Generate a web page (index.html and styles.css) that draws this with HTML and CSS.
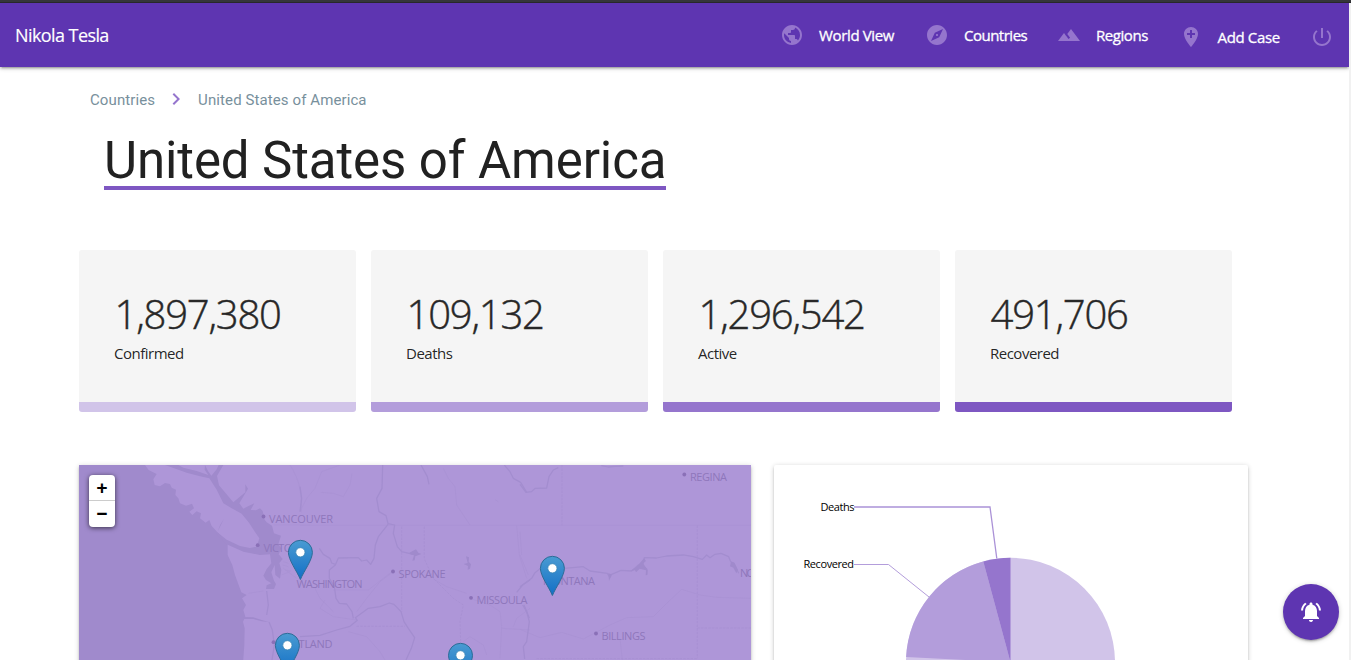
FILE: index.html
```html
<!DOCTYPE html>
<html lang="en">
<head>
<meta charset="utf-8">
<title>United States of America</title>
<link rel="stylesheet" href="styles.css">
</head>
<body>
<div class="topline"></div>
<div class="view">
<div class="page">
  <nav class="navbar">
    <span class="brand"><span class="fit">Nikola Tesla</span></span>
    <ul class="menu">
      <li class="item item-world"><svg class="icon" viewBox="0 0 24 24"><path d="M12 2C6.48 2 2 6.48 2 12s4.480 10 10 10 10-4.480 10-10S17.520 2 12 2zm-1 17.930c-3.950-.49-7-3.850-7-7.930 0-.62.08-1.210.21-1.790L9 15v1c0 1.100.9 2 2 2v1.930zm6.900-2.540c-.26-.81-1-1.390-1.900-1.390h-1v-3c0-.55-.45-1-1-1H8v-2h2c.55 0 1-.45 1-1V7h2c1.100 0 2-.9 2-2v-.41c2.930 1.190 5 4.060 5 7.410 0 2.080-.8 3.970-2.100 5.390z"/></svg><span class="fit">World View</span></li>
      <li class="item item-countries"><svg class="icon" viewBox="0 0 24 24"><path d="M12 10.900c-.61 0-1.100.49-1.100 1.100s.49 1.100 1.100 1.100 1.100-.49 1.100-1.100-.49-1.100-1.100-1.100zM12 2C6.480 2 2 6.480 2 12s4.480 10 10 10 10-4.480 10-10S17.520 2 12 2zm2.190 12.190L6 18l3.810-8.190L18 6l-3.810 8.190z"/></svg><span class="fit">Countries</span></li>
      <li class="item item-regions"><svg class="icon" viewBox="0 0 24 24"><path d="M14 6l-3.750 5 2.850 3.800-1.600 1.200C9.810 13.750 7 10 7 10l-6 8h22L14 6z"/></svg><span class="fit">Regions</span></li>
      <li class="item item-add"><svg class="icon" viewBox="0 0 24 24"><path d="M12 2C8.140 2 5 5.140 5 9c0 5.250 7 13 7 13s7-7.750 7-13c0-3.860-3.140-7-7-7zm4 8h-3v3h-2v-3H8V8h3V5h2v3h3v2z"/></svg><span class="fit">Add Case</span></li>
      <li class="item item-power"><svg class="icon" viewBox="0 0 24 24"><path d="M13 3h-2v10h2V3zm4.830 2.170l-1.420 1.420C17.990 7.860 19 9.810 19 12c0 3.870-3.130 7-7 7s-7-3.130-7-7c0-2.190 1.010-4.140 2.580-5.420L6.170 5.170C4.230 6.820 3 9.260 3 12c0 4.970 4.030 9 9 9s9-4.030 9-9c0-2.740-1.230-5.180-3.170-6.830z"/></svg></li>
    </ul>
  </nav>

  <main class="content">
    <div class="crumbs">
      <span>Countries</span>
      <svg class="chevron" viewBox="0 0 24 24"><path d="M10 6L8.590 7.410 13.170 12l-4.580 4.590L10 18l6-6z"/></svg>
      <span>United States of America</span>
    </div>
    <h1 class="title">United States of America</h1>

    <section class="stats">
      <div class="stat stat-confirmed"><div class="num">1,897,380</div><div class="label">Confirmed</div></div>
      <div class="stat stat-deaths"><div class="num">109,132</div><div class="label">Deaths</div></div>
      <div class="stat stat-active"><div class="num">1,296,542</div><div class="label">Active</div></div>
      <div class="stat stat-recovered"><div class="num">491,706</div><div class="label">Recovered</div></div>
    </section>

    <section class="panels">
      <div class="map">
        <svg class="map-canvas" viewBox="0 0 672 210">
          <defs>
            <linearGradient id="pinFill" x1="0" y1="0" x2="0" y2="1"><stop offset="0" stop-color="#4a9bd2"/><stop offset="1" stop-color="#126fc6"/></linearGradient>
            <g id="pin">
              <path d="M0 39.500C-3.500 31-12 20-12 12.300A12 12 0 0 1 12 12.300C12 20 3.500 31 0 39.500z" fill="url(#pinFill)" stroke="#2e6c97" stroke-width="1"/>
              <circle cx="0" cy="12.300" r="4.600" fill="#fff" stroke="#3a85b5" stroke-width=".8"/>
            </g>
          </defs>
          <rect width="672" height="210" fill="#ae96d8"/>
          <!-- Pacific coast -->
          <g transform="translate(-9 -10) scale(.33333)">
            <path class="water" d="M27 30H225L236 45L260 57L250 73L254 90L270 94L285 84L300 87L305 98L318 104L316 120L325 130L330 145L348 152L366 146L372 160L358 170L367 180L380 169L393 175L390 190L407 203L418 195L425 213L450 240L473 268V300L487 330L495 360L508 395L514 412L530 420L516 430L528 450L520 465L526 485L519 500L524 520L523 570L518 640H27Z"/>
            <path class="water" d="M285 30L302 36L350 53L390 64L418 70L440 104L460 145L485 160L515 176L537 203L555 231L568 250L560 275L540 279L510 273L470 254L442 232L462 191L450 211L440 238L470 268L520 290L570 300L600 298L604 325L590 342L580 362L588 375L604 385L590 391L588 402H612L618 387L612 377L604 352L614 330L616 360L630 371L634 345L628 324L638 312L626 298L634 280L625 268L633 242L612 235L606 212L590 202L584 194L578 168L570 160L558 166L542 165L553 145L534 154L520 161L508 145L526 115L534 101L526 88L526 112L506 128L490 142L466 113L447 91L441 63L460 30H446L440 43L424 62L414 48L405 30L404 44L415 60L380 48L340 38L325 30Z"/>
            <path class="water" d="M519 486L550 487L575 495L597 501L575 499L550 492L519 492Z"/>
            <path class="river" d="M597 501L607 525L613 570L606 615M590 408L595 450L590 480"/>
            <path class="road" d="M660 30C685 70 695 100 694 172M612 210H720M535 415L580 408M640 340L680 370M634 360L660 350M640 320L656 325M620 545L655 560L640 610M638 330L655 335M645 345L663 348"/>
          </g>
          <!-- Interior rivers and borders -->
          <g transform="translate(221 -10) scale(.33333)">
            <path class="road" d="M0 211H690M0 170L20 130L45 100L65 50L120 30M62 112L100 115L130 125L150 90L156 55M430 40L445 70L465 95L470 150L510 210M100 470L60 430L45 400M100 405H205L278 348M280 350L240 380L200 430L170 470M400 372L440 395L500 415M510 430L570 450L600 470L605 515L600 610M605 520L690 525M650 212L658 300L680 370M145 530L200 545L240 590L255 615M75 435L60 460L100 485L170 495M640 515L650 490L690 460M490 560L510 545L550 570L560 600M585 134L595 140"/>
            <path class="dashed" d="M305 215V470M373 215V312L400 370L430 400L460 430L490 450L480 500L482 560M170 514H315"/>
            <path class="river" d="M0 170L5 130L0 95M248 30L246 100L230 130L237 170L258 182L264 206L284 210L280 235L292 275L305 290L330 296M264 208L235 245L226 270L222 310L212 328L200 315L185 318L175 308L115 309L106 330L88 345V370L103 395L108 430L118 445L140 447L156 470L160 490M0 545L60 541L110 525L150 514L172 496L166 488L205 460L240 455L268 444L282 448L303 470L312 500L325 520L344 548L334 580L318 615M58 280L70 298L90 310L95 324L106 328M363 30L382 65L387 88M613 30L630 50L640 70L662 82L680 112M690 375L668 390L650 412M672 450L688 490"/>
            <path class="water" d="M328 293L348 283L355 293L364 297L346 304L344 316L337 317L342 301L332 299ZM498 304L507 307L506 320L513 328L510 341L503 344L504 333L491 327L503 324Z"/>
          </g>
          <g transform="translate(441 -10) scale(.33333)">
            <path class="road" d="M0 211H693M0 300L25 360M0 523L60 548L125 532L190 552L270 510L320 488L400 485L440 445L485 403L540 420L590 427L693 430M300 550L307 615M0 230L5 300"/>
            <path class="dashed" d="M126 30V211M532 212V610M532 519H693M50 611H532"/>
            <path class="river" d="M0 88L18 112L35 110L45 100L80 99L87 65L100 45L115 38M0 395L35 370L45 353L62 340M133 340L190 335L210 348L262 355L270 368L275 358L303 346L335 348L355 330L370 325L373 308L410 309L440 303L490 300L520 305L547 313L560 300L570 308L585 298L603 295L626 305L632 320L642 325L656 355M372 314L364 330L380 342L380 358M244 32L265 36L285 34L310 33M8 450L20 470L28 500L20 560L10 575L14 612"/>
            <path class="water" d="M265 355L275 358L267 378ZM372 310L378 318L369 325L383 345L382 360L377 361L378 346L359 341L348 352L345 346L330 348L350 335ZM633 320L643 323L654 345L649 355L640 338L630 334Z"/>
          </g>
          <g class="dots">
            <circle cx="184.500" cy="51.500" r="1.900"/><circle cx="178.700" cy="80.200" r="1.900"/><circle cx="194.500" cy="177.200" r="1.900"/><circle cx="314" cy="106.500" r="1.900"/><circle cx="392" cy="132.800" r="1.900"/><circle cx="605.300" cy="9.500" r="1.900"/><circle cx="517" cy="168.500" r="1.900"/>
          </g>
          <g class="places">
            <text x="190" y="57.600" textLength="64">VANCOUVER</text>
            <text x="184.500" y="86.600" textLength="44">VICTORIA</text>
            <text x="217.500" y="122.800" textLength="66">WASHINGTON</text>
            <text x="319.500" y="112.600" textLength="47">SPOKANE</text>
            <text x="397.500" y="139" textLength="51">MISSOULA</text>
            <text x="611" y="15.600" textLength="37">REGINA</text>
            <text x="464" y="119.500" textLength="52">MONTANA</text>
            <text x="661" y="111.500" textLength="15">NO</text>
            <text x="522.500" y="174.600" textLength="44">BILLINGS</text>
            <text x="198.500" y="183" textLength="55">PORTLAND</text>
          </g>
          <use href="#pin" x="221.400" y="75"/>
          <use href="#pin" x="473.400" y="91"/>
          <use href="#pin" x="208.400" y="168"/>
          <use href="#pin" x="381.500" y="178"/>
        </svg>
        <div class="zoom"><span class="zoom-btn">+</span><span class="zoom-btn">−</span></div>
      </div>

      <div class="chart">
        <svg class="chart-canvas" viewBox="0 0 474 210">
          <circle cx="236.500" cy="197.300" r="104.500" fill="#d1c4e9"/>
          <path d="M236.500 197.300L132.100 192A104.500 104.500 0 0 1 209.300 96.400Z" fill="#b39ddb"/>
          <path d="M236.500 197.300L209.300 96.400A104.500 104.500 0 0 1 236.500 92.800Z" fill="#9575cd"/>
          <path class="leader leader-deaths" d="M80 42H216L222.800 93.500"/>
          <path class="leader" d="M80 99.500H114.500L155 132"/>
          <text x="46.500" y="46" textLength="34">Deaths</text>
          <text x="29.500" y="103" textLength="50.500">Recovered</text>
        </svg>
      </div>
    </section>
  </main>
</div>
<div class="track"></div>
</div>
<div class="fab"><svg class="bell" viewBox="0 0 24 24"><path d="M7.580 4.080L6.150 2.650C3.750 4.480 2.170 7.300 2.030 10.500h2c.15-2.650 1.510-4.970 3.550-6.420zm12.390 6.420h2c-.15-3.200-1.730-6.020-4.120-7.850l-1.420 1.430c2.020 1.450 3.390 3.770 3.540 6.420zM18 11c0-3.070-1.640-5.640-4.500-6.320V4c0-.83-.67-1.500-1.500-1.500s-1.500.67-1.500 1.500v.68C7.630 5.360 6 7.920 6 11v5l-2 2v1h16v-1l-2-2v-5zm-6 11c.14 0 .27-.01.4-.04.65-.14 1.180-.58 1.440-1.180.1-.24.15-.5.15-.78h-4c.01 1.100.9 2 2.010 2z"/></svg></div>
</body>
</html>
```
FILE: styles.css
```css
* { box-sizing: border-box; }
body { margin: 0; height: 660px; overflow: hidden; background: #fff; font-family: "Open Sans", "Noto Sans", sans-serif; color: rgba(0,0,0,.87); }
.topline { height: 3px; background: #35363a; border-bottom: 1px solid #28282b; }
.view { display: flex; height: 657px; }
.page { width: 1349px; overflow: hidden; }
.track { width: 2px; background: #f1f1f1; }

.navbar { display: flex; justify-content: space-between; height: 64px; padding-left: 15px; background: #5e35b1; color: #fff; box-shadow: 0 2px 2px rgba(0,0,0,.14), 0 3px 1px -2px rgba(0,0,0,.12), 0 1px 5px rgba(0,0,0,.2); }
.brand { font-size: 18px; line-height: 65px; letter-spacing: -.58px; -webkit-text-stroke: .15px #fff; }
.fit { white-space: nowrap; }
.menu { display: flex; margin: 0; padding: 0; list-style: none; font-size: 15px; letter-spacing: -.35px; -webkit-text-stroke: .3px #fff; }
.item { display: flex; align-items: center; gap: 15px; height: 64px; }
.item-world { width: 145px; }
.item-countries { width: 132px; letter-spacing: -.5px; }
.item-regions { width: 121.500px; letter-spacing: -.45px; }
.item-add { width: 131.500px; padding-top: 4px; }
.item-power { width: 39px; padding-top: 4px; }
.icon { flex: none; width: 24px; height: 24px; fill: #9575cd; }

.content { width: 1170px; margin-left: 79px; }
.crumbs { display: flex; align-items: center; height: 24px; padding-left: 11px; margin-top: 21px; font: 15px/24px Roboto, sans-serif; letter-spacing: .1px; color: #78909c; }
.chevron { width: 24px; height: 24px; margin: -2px 10px 0 9px; fill: #9575cd; }
.title { width: 562px; height: 61px; margin: 17px 0 0 25px; border-bottom: 4px solid #7e57c2; font: 400 51px/64px Roboto, sans-serif; letter-spacing: -.1px; color: #212121; white-space: nowrap; }

.stats { display: flex; gap: 15px; margin-top: 60px; }
.stat { width: 277px; height: 162px; padding: 35px; background: #f5f5f5; border-bottom: 10px solid; border-radius: 3px; }
.stat-confirmed { border-color: #d1c4e9; }
.stat-deaths { border-color: #b39ddb; }
.stat-active { border-color: #9575cd; }
.stat-recovered { border-color: #7e57c2; }
.num { font-size: 40px; font-weight: 300; line-height: 58px; letter-spacing: -1.2px; padding-left: .5px; -webkit-text-stroke: .5px #2e2e2e; }
.label { margin-top: -1px; font-size: 15px; line-height: 22px; letter-spacing: -.5px; }

.panels { display: flex; gap: 23px; margin-top: 53px; }
.map, .chart { height: 210px; box-shadow: 0 2px 2px rgba(0,0,0,.14), 0 3px 1px -2px rgba(0,0,0,.12), 0 1px 5px rgba(0,0,0,.2); }
.map { position: relative; width: 672px; overflow: hidden; }
.map-canvas, .chart-canvas { display: block; width: 100%; height: 210px; }
.water { fill: #a08acc; }
.river { fill: none; stroke: #a38dcf; stroke-width: 3.800; stroke-linejoin: round; }
.road { fill: none; stroke: #a891d3; stroke-width: 2.200; stroke-linejoin: round; }
.dashed { fill: none; stroke: #a68fd1; stroke-width: 2.200; stroke-dasharray: 7 4; }
.dots { fill: #8a70b7; }
.places { fill: #8e77bb; font-size: 11px; }
.zoom { position: absolute; left: 10px; top: 10px; width: 26px; height: 52px; background: #fff; border-radius: 4px; box-shadow: 0 1px 5px rgba(0,0,0,.65); }
.zoom-btn { display: block; height: 26px; font: bold 19px/28px "Liberation Mono", monospace; text-align: center; color: #000; }
.zoom-btn:first-child { border-bottom: 1px solid #ccc; }

.chart { width: 474px; border-radius: 2px; background: #fff; font-size: 11px; }
.leader { fill: none; stroke: #b39ddb; stroke-width: 1; }
.leader-deaths { stroke: #ab92d7; stroke-width: 1.300; }

.fab { position: fixed; left: 1283px; top: 584px; display: flex; align-items: center; justify-content: center; width: 56px; height: 56px; border-radius: 50%; background: #5e35b1; box-shadow: 0 2px 2px rgba(0,0,0,.14), 0 3px 1px -2px rgba(0,0,0,.12), 0 1px 5px rgba(0,0,0,.2); }
.bell { width: 24px; height: 24px; fill: #fff; }
```
